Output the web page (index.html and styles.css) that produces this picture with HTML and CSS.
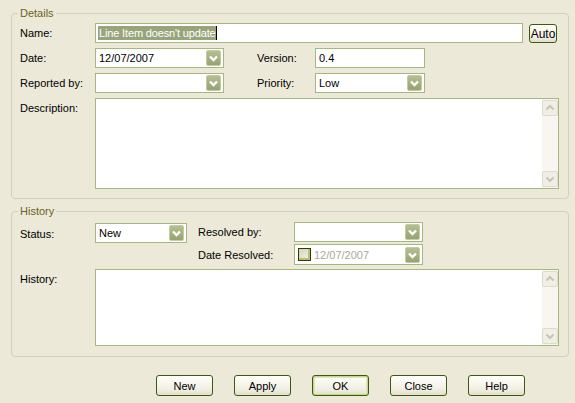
FILE: index.html
```html
<!DOCTYPE html>
<html>
<head>
<meta charset="utf-8">
<link rel="stylesheet" href="styles.css">
</head>
<body>
<fieldset class="group">
  <legend>Details</legend>
  <div class="inner details">
    <div class="row">
      <div class="lbl">Name:</div>
      <div class="edit name"><span class="sel">Line Item doesn't update</span><span class="caret"></span></div>
      <div class="btn auto">Auto</div>
    </div>
    <div class="row">
      <div class="lbl">Date:</div>
      <div class="combo w129"><span class="val">12/07/2007</span><span class="drop"><svg width="15" height="16" viewBox="0 0 15 16"><polyline points="4,6.5 7.5,10 11,6.5" fill="none" stroke="#fff" stroke-width="2.4"/></svg></span></div>
      <div class="lbl2">Version:</div>
      <div class="edit w110"><span class="val">0.4</span></div>
    </div>
    <div class="row">
      <div class="lbl">Reported by:</div>
      <div class="combo w129"><span class="val"></span><span class="drop"><svg width="15" height="16" viewBox="0 0 15 16"><polyline points="4,6.5 7.5,10 11,6.5" fill="none" stroke="#fff" stroke-width="2.4"/></svg></span></div>
      <div class="lbl2">Priority:</div>
      <div class="combo w110"><span class="val">Low</span><span class="drop"><svg width="15" height="16" viewBox="0 0 15 16"><polyline points="4,6.5 7.5,10 11,6.5" fill="none" stroke="#fff" stroke-width="2.4"/></svg></span></div>
    </div>
    <div class="row tall desc">
      <div class="lbl top">Description:</div>
      <div class="memo h91">
        <div class="sb">
          <span class="sbtn"><svg width="14" height="14" viewBox="0 0 14 14"><polyline points="3.5,8.5 7,5 10.5,8.5" fill="none" stroke="#c6c5b5" stroke-width="2"/></svg></span>
          <span class="sbtn"><svg width="14" height="14" viewBox="0 0 14 14"><polyline points="3.5,5.5 7,9 10.5,5.5" fill="none" stroke="#c6c5b5" stroke-width="2"/></svg></span>
        </div>
      </div>
    </div>
  </div>
</fieldset>

<fieldset class="group hist">
  <legend>History</legend>
  <div class="inner history">
    <div class="htop">
      <div class="lbl status-l">Status:</div>
      <div class="combo w92 status"><span class="val">New</span><span class="drop"><svg width="15" height="16" viewBox="0 0 15 16"><polyline points="4,6.5 7.5,10 11,6.5" fill="none" stroke="#fff" stroke-width="2.4"/></svg></span></div>
      <div class="rcol">
        <div class="rrow">
          <div class="lbl3">Resolved by:</div>
          <div class="combo w129"><span class="val"></span><span class="drop"><svg width="15" height="16" viewBox="0 0 15 16"><polyline points="4,6.5 7.5,10 11,6.5" fill="none" stroke="#fff" stroke-width="2.4"/></svg></span></div>
        </div>
        <div class="rrow r2">
          <div class="lbl3">Date Resolved:</div>
          <div class="combo w129 h21"><span class="val dis"><span class="chk"></span>12/07/2007</span><span class="drop"><svg width="15" height="16" viewBox="0 0 15 16"><polyline points="4,6.5 7.5,10 11,6.5" fill="none" stroke="#fff" stroke-width="2.4"/></svg></span></div>
        </div>
      </div>
    </div>
    <div class="row tall histrow">
      <div class="lbl top">History:</div>
      <div class="memo h77">
        <div class="sb">
          <span class="sbtn"><svg width="14" height="14" viewBox="0 0 14 14"><polyline points="3.5,8.5 7,5 10.5,8.5" fill="none" stroke="#c6c5b5" stroke-width="2"/></svg></span>
          <span class="sbtn"><svg width="14" height="14" viewBox="0 0 14 14"><polyline points="3.5,5.5 7,9 10.5,5.5" fill="none" stroke="#c6c5b5" stroke-width="2"/></svg></span>
        </div>
      </div>
    </div>
  </div>
</fieldset>

<div class="buttons">
  <div class="btn">New</div>
  <div class="btn">Apply</div>
  <div class="btn default">OK</div>
  <div class="btn">Close</div>
  <div class="btn">Help</div>
</div>
</body>
</html>
```

FILE: styles.css
```css
html, body {
  margin: 0;
  padding: 0;
}
body {
  background: #ece9d8;
  font-family: "Liberation Sans", Arial, sans-serif;
  font-size: 11px;
  color: #000;
  width: 575px;
  height: 403px;
  overflow: hidden;
}
* {
  box-sizing: border-box;
}
.group {
  margin: 7px 6px 0 11px;
  padding: 0;
  border: 1px solid #d0d0bf;
  border-radius: 4px;
  min-width: 0;
}
.group.hist {
  margin-top: 6px;
}
legend {
  padding: 0 2px;
  margin-left: 6px;
  color: #6f6120;
  line-height: 13px;
  font-size: 11px;
}
.inner {
  padding: 3px 0 9px 8px;
}
.inner.history {
  padding-top: 4px;
  padding-bottom: 10px;
}
.row {
  display: flex;
  align-items: center;
  height: 20px;
  margin-bottom: 5px;
}
.row.tall {
  align-items: flex-start;
  height: auto;
  margin-bottom: 0;
}
.row.histrow {
  margin-top: 4px;
}
.lbl {
  width: 75px;
  flex: none;
}
.lbl.top {
  padding-top: 4px;
}
.lbl2 {
  width: 58px;
  margin-left: 33px;
  flex: none;
}
.lbl3 {
  width: 96px;
  flex: none;
}
.edit, .combo {
  height: 20px;
  border: 1px solid #a5b880;
  background: #fff;
  display: flex;
  align-items: center;
  flex: none;
  white-space: nowrap;
}
.edit {
  padding-left: 2px;
}
.edit.name {
  width: 428px;
}
.w129 { width: 129px; }
.w110 { width: 110px; }
.w92 { width: 92px; }
.h21 { height: 21px; }
.val {
  padding-left: 1px;
  flex: 1;
  display: flex;
  align-items: center;
}
.combo .val {
  padding-left: 3px;
}
.sel {
  background: #98a57a;
  color: #fff;
  line-height: 14px;
  padding: 0 0 0 1px;
  letter-spacing: -0.15px;
}
.caret {
  width: 1px;
  height: 14px;
  background: #000;
}
.combo {
  justify-content: space-between;
  padding-right: 1px;
}
.drop {
  width: 15px;
  height: 16px;
  flex: none;
  border: 1px solid #c2caa6;
  border-radius: 2px;
  background: linear-gradient(#b4c08f, #96a270);
  display: flex;
  align-items: center;
  justify-content: center;
  margin-right: 1px;
}
.drop svg {
  display: block;
  margin: -1px;
}
.dis {
  color: #aca899;
}
.chk {
  width: 13px;
  height: 13px;
  border: 1px solid #223f0c;
  background: linear-gradient(135deg, #d5d4c2, #f4f3ea);
  box-shadow: inset -1px -1px 0 1px #c4bb70, inset 1px 1px 0 0 #ddd8a8;
  margin: 0 3px 0 0;
  flex: none;
}
.memo {
  width: 464px;
  border: 1px solid #a5b880;
  background: #fff;
  display: flex;
  justify-content: flex-end;
  flex: none;
}
.h91 { height: 91px; }
.h77 { height: 77px; }
.sb {
  width: 16px;
  background: #f7f6f0;
  display: flex;
  flex-direction: column;
  justify-content: space-between;
  padding: 1px 0;
}
.sbtn {
  width: 16px;
  height: 16px;
  border: 1px solid #dcdbcd;
  border-radius: 2px;
  background: #f0efe5;
  display: flex;
  align-items: center;
  justify-content: center;
}
.htop {
  display: flex;
  align-items: flex-start;
}
.status {
  margin-top: 1px;
}
.status-l {
  padding-top: 6px;
}
.rcol {
  margin-left: 11px;
  display: flex;
  flex-direction: column;
}
.rrow {
  display: flex;
  align-items: center;
}
.rrow.r2 {
  margin-top: 2px;
}
.btn {
  width: 57px;
  height: 21px;
  border: 1px solid #3a5a12;
  border-radius: 3px;
  background: linear-gradient(#fffffb, #f1efe3 70%, #e2dfcc);
  display: flex;
  align-items: center;
  justify-content: center;
  flex: none;
}
.btn.auto {
  width: 28px;
  height: 19px;
  margin-left: 6px;
  margin-top: 1px;
  font-size: 12px;
}
.btn.default {
  box-shadow: inset 0 0 0 1px #c6d68e, inset 0 0 0 2px #dfe8b6;
}
.buttons {
  display: flex;
  gap: 21px;
  padding-left: 156px;
  margin-top: 18px;
}
```
